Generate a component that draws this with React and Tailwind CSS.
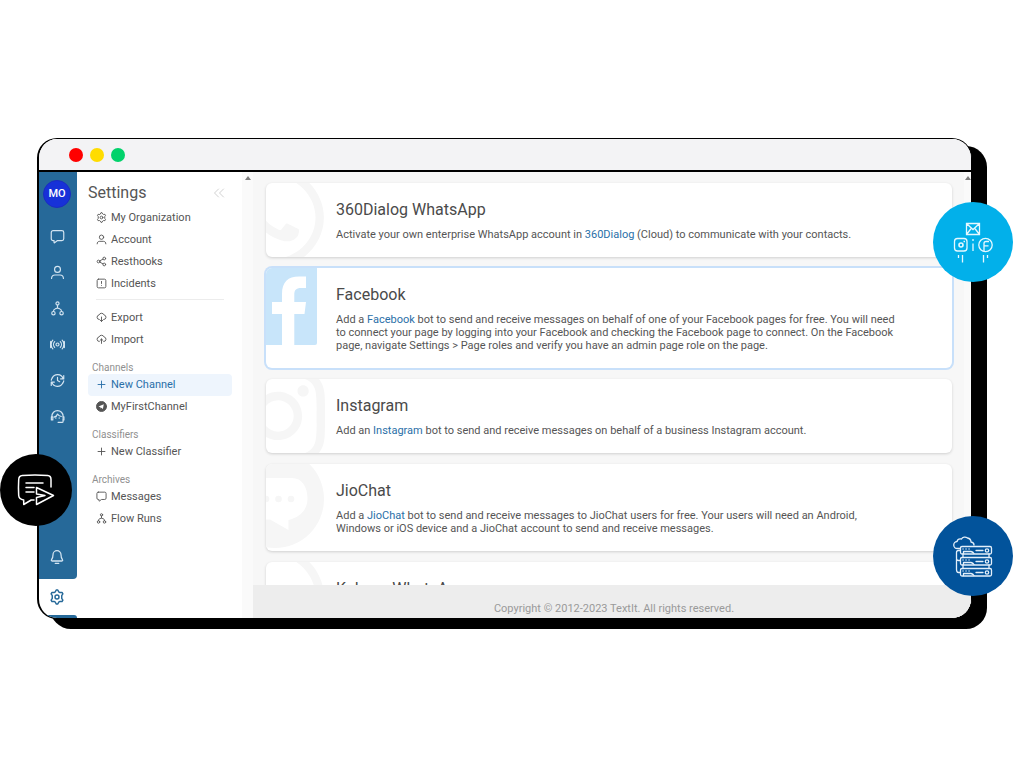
import React from "react";
import { FaInstagram, FaWhatsapp } from "react-icons/fa";

function Icon({ size = 16, width = 1.9, children }) {
  return (
    <svg
      width={size}
      height={size}
      viewBox="0 0 24 24"
      fill="none"
      stroke="currentColor"
      strokeWidth={width}
      strokeLinecap="round"
      strokeLinejoin="round"
      aria-hidden="true"
      className="shrink-0"
    >
      {children}
    </svg>
  );
}

const shapes = {
  message: <path d="M5 2.500h14a3 3 0 0 1 3 3v10a3 3 0 0 1-3 3h-7l-4.700 3.400c-.5.400-.8.200-.8-.4v-3H5a3 3 0 0 1-3-3v-10a3 3 0 0 1 3-3z" />,
  user: (
    <>
      <circle cx="12" cy="7" r="4.700" />
      <path d="M2.500 21.500c.2-3.800 2-5.500 5.500-5.500h8c3.500 0 5.300 1.700 5.500 5.500" />
    </>
  ),
  flow: (
    <>
      <circle cx="12" cy="4" r="2.500" />
      <circle cx="5.500" cy="19.500" r="2.700" />
      <circle cx="18.500" cy="19.500" r="2.700" />
      <path d="M12 6.500V11M5.500 16.800c0-3.800 1.500-4 3.500-4.500 1.500-.3 3-.5 3-1.800 0 1.300 1.500 1.500 3 1.800 2 .5 3.500.7 3.500 4.500" />
    </>
  ),
  broadcast: (
    <>
      <circle cx="12" cy="12" r="2.400" />
      <path d="M7.500 16.500a6.400 6.400 0 0 1 0-9M16.500 7.500a6.400 6.400 0 0 1 0 9M4.500 19c-3.500-3.900-3.500-10.100 0-14M19.500 5c3.500 3.900 3.500 10.100 0 14M1.200 17a12 12 0 0 1 0-10M22.800 7a12 12 0 0 1 0 10" />
    </>
  ),
  history: (
    <>
      <path d="M21 9A9.500 9.500 0 0 0 3.500 8M3 15A9.500 9.500 0 0 0 20.500 16M22 4v5.500h-5M2 20v-5.500h5M12 7v5l3.500 2" />
      <path d="M2 11.500c.2-1.300.7-2.500 1.500-3.500M22 12.500c-.2 1.300-.7 2.500-1.500 3.500" />
    </>
  ),
  agent: (
    <>
      <path d="M3 12.500v-1a9 9 0 0 1 18 0V19.500a2 2 0 0 1-2 2h-6" />
      <path d="M3.500 12.500H2.200v5h2.300v-5zM21 12.500h1.300v5H21" />
      <path d="M6.500 13c3-.7 5-2.700 5.500-5 1.500 2.500 3 3.800 6 4" />
      <path d="M9.300 14.300v.4M14.700 14.300v.4" />
    </>
  ),
  bell: <path d="M9.300 21.500h5.400M18 8.500a6 6 0 0 0-12 0c0 4-1 6-2.200 7.600-.6.900-.3 1.900.8 1.900h14.800c1.100 0 1.400-1 .8-1.900C19 14.500 18 12.500 18 8.500z" />,
  settings: (
    <>
      <circle cx="12" cy="12" r="3" />
      <path d="M9.500 4.200 10.800 1.500h2.400l1.300 2.700 2 1.200 3-.3 1.300 2.300-1.700 2.500v4.200l1.700 2.500-1.300 2.300-3-.3-2 1.200-1.300 2.700h-2.400l-1.300-2.700-2-1.200-3 .3-1.300-2.300 1.700-2.500V9.900L3.200 7.400l1.300-2.300 3 .3z" />
    </>
  ),
  share: (
    <>
      <circle cx="5.500" cy="12" r="3" />
      <circle cx="18" cy="5.500" r="3" />
      <circle cx="18" cy="18.500" r="3" />
      <path d="m8.200 10.600 7-3.700M8.200 13.400l7 3.700" />
    </>
  ),
  incident: (
    <>
      <rect x="2.500" y="2.500" width="19" height="19" rx="3" />
      <path d="M12 7.500v4.500M12 16v.1" />
    </>
  ),
  download: <path d="M7 16.500a5 5 0 0 1-.5-9.900 6 6 0 0 1 11.200 0A5 5 0 0 1 17 16.500M12 11v9.500m-3.200-3L12 20.500l3.200-3" />,
  upload: <path d="M7 16.500a5 5 0 0 1-.5-9.900 6 6 0 0 1 11.200 0A5 5 0 0 1 17 16.500M12 20.500V11m-3.200 3L12 11l3.200 3" />,
  plus: <path d="M12 4.500v15M4.500 12h15" />,
  telegram: (
    <>
      <circle cx="12" cy="12" r="11" fill="currentColor" />
      <path d="M5.500 12 17 7.200l-2 10.300-3.300-2.600-1.700 1.600-.3-3z" fill="#fff" stroke="none" />
    </>
  ),
  collapse: <path d="m11 4-8 8 8 8M21 4l-8 8 8 8" />,
};

const railItems = [
  ["Messages", "message"],
  ["Contacts", "user"],
  ["Flows", "flow"],
  ["Campaigns", "broadcast"],
  ["Triggers", "history"],
  ["Tickets", "agent"],
];

const channels = [
  {
    name: "360Dialog WhatsApp",
    logo: "whatsapp",
    text: (
      <>
        Activate your own enterprise WhatsApp account in <Link>360Dialog</Link> (Cloud) to communicate with your
        contacts.
      </>
    ),
  },
  {
    name: "Facebook",
    logo: "facebook",
    active: true,
    text: (
      <>
        Add a <Link>Facebook</Link> bot to send and receive messages on behalf of one of your Facebook pages for free.
        You will need to connect your page by logging into your Facebook and checking the Facebook page to connect. On
        the Facebook page, navigate Settings &gt; Page roles and verify you have an admin page role on the page.
      </>
    ),
  },
  {
    name: "Instagram",
    logo: "instagram",
    text: (
      <>
        Add an <Link>Instagram</Link> bot to send and receive messages on behalf of a business Instagram account.
      </>
    ),
  },
  {
    name: "JioChat",
    logo: "jiochat",
    text: (
      <>
        Add a <Link>JioChat</Link> bot to send and receive messages to JioChat users for free. Your users will need an
        Android, Windows or iOS device and a JioChat account to send and receive messages.
      </>
    ),
  },
  { name: "Kaleyra WhatsApp", logo: "whatsapp" },
];

function Link({ children }) {
  return (
    <a href="#" className="text-[#2a6fa8]">
      {children}
    </a>
  );
}

function Rail() {
  return (
    <nav className="flex w-[38px] shrink-0 flex-col" aria-label="Main">
      <div className="flex flex-1 flex-col items-center rounded-br bg-[#266999] pt-2 pr-0.5 pb-1 text-[#d3e4f1]">
        <button className="mb-2.5 size-7 rounded-full border border-[#1a2cc0] bg-[#1731d8] text-[11px] font-medium text-white">
          MO
        </button>
        {railItems.map(([label, icon]) => (
          <button key={label} aria-label={label} className="flex h-9 w-full items-center justify-center">
            <Icon size={15}>{shapes[icon]}</Icon>
          </button>
        ))}
        <button aria-label="Notifications" className="mt-auto flex h-9 w-full items-center justify-center">
          <Icon size={16}>{shapes.bell}</Icon>
        </button>
      </div>
      <button aria-label="Settings" className="flex h-9 w-full items-center justify-center pr-0.5 text-[#266999]">
        <Icon size={16} width={2.2}>{shapes.settings}</Icon>
      </button>
      <div className="h-[3px] rounded-tr bg-[#266999]" />
    </nav>
  );
}

function Item({ icon, active, children }) {
  return (
    <a
      href="#"
      className={
        active
          ? "flex h-[22px] items-center gap-1 rounded bg-[#eef5fd] pl-2 text-[#2a6fa8]"
          : "flex h-[22px] items-center gap-1 pl-2"
      }
    >
      <span className="pb-0.5">
        <Icon size={11} width={2}>{shapes[icon]}</Icon>
      </span>
      {children}
    </a>
  );
}

function Group({ children }) {
  return <h2 className="mt-2.5 pl-1 text-[10px] leading-[13px] text-[#909090]">{children}</h2>;
}

function SettingsMenu() {
  return (
    <aside className="w-[165px] shrink-0 bg-white pt-[11px] pr-2.5 pl-[11px] text-[11px] text-[#555]">
      <header className="mb-1 flex h-5 items-center justify-between pr-[7px]">
        <h1 className="text-[16px] leading-5">Settings</h1>
        <button aria-label="Collapse menu" className="text-[#cfcfcf]">
          <Icon size={12}>{shapes.collapse}</Icon>
        </button>
      </header>
      <Item icon="settings">My Organization</Item>
      <Item icon="user">Account</Item>
      <Item icon="share">Resthooks</Item>
      <Item icon="incident">Incidents</Item>
      <hr className="mx-2 mt-1 mb-[7px] border-[#ececec]" />
      <Item icon="download">Export</Item>
      <Item icon="upload">Import</Item>
      <Group>Channels</Group>
      <Item icon="plus" active>New Channel</Item>
      <Item icon="telegram">MyFirstChannel</Item>
      <Group>Classifiers</Group>
      <Item icon="plus">New Classifier</Item>
      <Group>Archives</Group>
      <Item icon="message">Messages</Item>
      <Item icon="flow">Flow Runs</Item>
    </aside>
  );
}

function ScrollArrow() {
  return (
    <svg width="6" height="4" viewBox="0 0 6 4" aria-hidden="true" className="shrink-0">
      <path d="M3 0 6 4H0z" fill="#7d7d7d" />
    </svg>
  );
}

function Watermark({ logo }) {
  if (logo === "whatsapp") {
    return <FaWhatsapp className="absolute -top-[22px] -left-[42px] h-[114px] w-[100px] text-[#f6f6f6]" />;
  }
  if (logo === "instagram") {
    return <FaInstagram className="absolute -top-[17px] -left-[35px] h-[108px] w-[94px] text-[#f6f6f6]" />;
  }
  if (logo === "facebook") {
    return (
      <svg className="absolute top-0 left-0" width="51" height="77" viewBox="0 0 51 77" aria-hidden="true">
        <path d="M0 0h51v75a2 2 0 0 1-2 2H0z" fill="#c8e5fa" />
        <path
          d="M16 77V46H6V34h10v-8C16 14 22 8.500 33 8.500h7V20h-5c-5 0-6.700 2-6.700 7v7H40l-1.500 12H28.300v31z"
          fill="#fff"
        />
      </svg>
    );
  }
  return (
    <svg className="absolute top-0 left-0" width="60" height="88" viewBox="0 0 60 88" aria-hidden="true">
      <circle cx="9" cy="35" r="49" fill="#f6f6f6" />
      <path d="M-10 14H26c10 0 15.500 9 15.500 20.500S34 53 22.500 56v10L4 55.500h-14z" fill="#fff" />
      <circle cx="0" cy="35" r="3.300" fill="#f6f6f6" />
      <circle cx="12.500" cy="35" r="3.300" fill="#f6f6f6" />
      <circle cx="25" cy="35" r="3.300" fill="#f6f6f6" />
    </svg>
  );
}

function ChannelCard({ channel }) {
  return (
    <article
      className={
        channel.active
          ? "shrink-0 rounded-md bg-white shadow-[0_0_0_2px_#c8e0fa]"
          : "shrink-0 rounded-md bg-white shadow-[0_1px_3px_rgba(0,0,0,0.16)]"
      }
    >
      <div className="relative overflow-hidden rounded-md pt-[17px] pr-12 pb-4 pl-[70px]">
        <Watermark logo={channel.logo} />
        <h2 className="mb-2 text-[16px] leading-5 text-[#4a4a4a]">{channel.name}</h2>
        {channel.text && <p className="text-[11px] leading-[13px] text-[#555]">{channel.text}</p>}
      </div>
    </article>
  );
}

function MessageBadge() {
  return (
    <div className="absolute bottom-[93px] -left-[37px] size-[72px] rounded-full bg-black">
      <svg viewBox="0 0 72 72" fill="none" stroke="#fff" strokeWidth="1.500" strokeLinecap="round" strokeLinejoin="round" aria-hidden="true">
        <path d="M51 33V25.500c0-2.500-1-3.800-3.300-4-7.700-.7-17.700-.7-25.400 0-2.300.2-3.500 1.500-3.600 4-.3 5-.3 11 0 16 .2 2.700 1.500 4 5 4.500V50.500l7.500-4.500H34" />
        <path d="M26 29H43M26 33.500H34M26 38H34" />
        <path d="M36.500 33.500 53.500 41.500 36.500 50.500V43.500L45 41.500 36.500 40z" />
      </svg>
    </div>
  );
}

function SocialBadge() {
  return (
    <div className="absolute top-16 -right-[41px] size-20 rounded-full bg-[#02b0ea]">
      <svg viewBox="0 0 80 80" fill="none" stroke="#e6f8ff" strokeWidth="1.300" aria-hidden="true">
        <path d="M33.500 21.500h13v11h-13zM33.500 21.500l6.500 6 6.500-6M33.500 32.500l5-6.500M46.500 32.500l-5-6.500" />
        <rect x="21.500" y="36.500" width="12.500" height="12.500" rx="3" />
        <circle cx="28" cy="43" r="2" strokeWidth="1.600" />
        <path d="M30.500 39.500h1.500M40 37v2M40 41.500v7.500" />
        <circle cx="52.500" cy="43" r="6.700" />
        <path d="M51 49.500v-8q0-2 2-2H56M51 43.800h4.500" />
        <path d="M25.500 53v3M29.500 53v7.500M50.500 53v7.500M54.500 53v3" />
      </svg>
    </div>
  );
}

function ServerBadge() {
  return (
    <div className="absolute -right-[41px] bottom-[23px] size-20 rounded-full bg-[#02539b]">
      <svg viewBox="0 0 80 80" fill="none" stroke="#e3effa" strokeWidth="1.300" strokeLinejoin="round" strokeLinecap="round" aria-hidden="true">
        <path d="M27 32.500h-2.500a3.500 3.500 0 0 1-.5-7c.5-2 2.500-3 4.500-2.500 1-2 4-2.500 6-1 2.500.5 3.500 2 3.500 4 2 .3 3 1.500 3 3" />
        {[30.5, 41.5, 52.5].map((y) => (
          <g key={y}>
            <rect x="27.500" y={y} width="31" height="7.500" rx="1.500" />
            <path d={`M43 ${y + 4}h7M30 ${y + 2.5}h.1M33 ${y + 2.5}h.1M36 ${y + 2.5}h.1M30.500 ${y + 7}v-2h7.500q2 .5 3 2`} />
            <circle cx="54" cy={y + 4} r="1.700" />
          </g>
        ))}
        <path d="M30 38v3.500M56 38v3.500M30 49v3.500M56 49v3.500M27 34.500h-1.500q-2 0-2 2v6q0 2 2 2H27M23.500 43v10.500q0 3 2 3H27" />
      </svg>
    </div>
  );
}

export default function App() {
  return (
    <div className="flex h-screen flex-col bg-white pt-[138px] pr-[52px] pb-[149px] pl-[37px] font-[Roboto,sans-serif]">
      <div className="relative flex min-h-0 flex-1 flex-col">
        <div className="flex min-h-0 flex-1 flex-col overflow-hidden rounded-[20px] border border-l-2 border-black bg-white shadow-[14px_9px_0_1px_#000]">
          <div className="flex h-[33px] shrink-0 items-center gap-[7px] border-b-2 border-black bg-[#f3f3f5] pl-[30px]">
            <span className="size-3.5 rounded-full bg-[#ff0000]" />
            <span className="size-3.5 rounded-full bg-[#ffdc00]" />
            <span className="size-3.5 rounded-full bg-[#02d26b]" />
          </div>
          <div className="flex min-h-0 flex-1">
            <Rail />
            <SettingsMenu />
            <div className="flex w-[11px] shrink-0 justify-center bg-[#fafafa] pt-1">
              <ScrollArrow />
            </div>
            <main className="flex min-w-0 flex-1 flex-col bg-[#f7f7f7]">
              <div className="flex min-h-0 flex-1">
                <div className="flex min-w-0 flex-1 flex-col gap-[11px] overflow-hidden pt-[11px] pr-3 pl-[13px]">
                  {channels.map((channel) => (
                    <ChannelCard key={channel.name} channel={channel} />
                  ))}
                </div>
                <div className="flex w-[7px] shrink-0 justify-end bg-[#fafafa] pt-1">
                  <ScrollArrow />
                </div>
              </div>
              <footer className="bg-[#ededed] pt-[17px] pb-[3px] pl-1 text-center text-[11px] leading-[13px] text-[#9a9a9a]">
                Copyright © 2012-2023 TextIt. All rights reserved.
              </footer>
            </main>
          </div>
        </div>
        <MessageBadge />
        <SocialBadge />
        <ServerBadge />
      </div>
    </div>
  );
}
